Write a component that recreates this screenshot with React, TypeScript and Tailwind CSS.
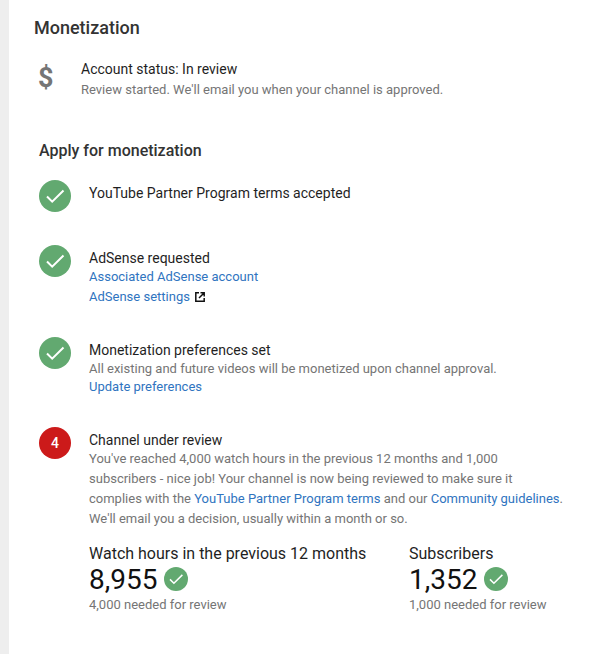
import { ReactNode } from 'react'

function Check({ size = 32, className }: { size?: number; className?: string }) {
  return (
    <svg width={size} height={size} viewBox="0 0 32 32" className={`shrink-0 ${className ?? ''}`}>
      <circle cx="16" cy="16" r="16" fill="#62a970" />
      <path d="M8 16.5l5.2 5.2L24.5 10.5" fill="none" stroke="#fff" strokeWidth="2" />
    </svg>
  )
}

function Step({ icon, title, children, className }: { icon: ReactNode; title: string; children?: ReactNode; className?: string }) {
  return (
    <div className={`flex ${className ?? ''}`}>
      <div className="w-[50px] shrink-0">{icon}</div>
      <div className="flex-1 pt-[3px]">
        <div className="text-[14px] leading-[20px] text-[#1f1f1f]">{title}</div>
        {children}
      </div>
    </div>
  )
}

function Stat({ label, value, need, className }: { label: string; value: string; need: string; className?: string }) {
  return (
    <div className={className}>
      <div className="text-[16px] leading-[20px] text-[#1f1f1f]">{label}</div>
      <div className="flex items-center gap-[7px] h-[32px]">
        <span className="text-[28px] leading-[32px] text-[#111]">{value}</span>
        <Check size={24} className="-mt-[3px]" />
      </div>
      <div className="text-[13px] leading-[20px] text-[#757575] -mt-[1px]">{need}</div>
    </div>
  )
}

export default function App() {
  return (
    <div className="h-[654px] w-[604px] overflow-hidden bg-white font-['Roboto','Liberation_Sans',sans-serif]">
      <div className="h-full border-l-[9px] border-[#eeeeee] pl-[25px] pt-[16px]">
        <h1 className="text-[18px] leading-[24px] font-medium text-[#333]">Monetization</h1>
        <div className="flex mt-[19px]">
          <div className="w-[47px] text-[27px] leading-[40px] font-bold text-[#757575] pl-[4px] -mt-[1px]">$</div>
          <div>
            <div className="text-[14px] leading-[20px] text-[#1f1f1f]">Account status: In review</div>
            <div className="text-[13px] leading-[20px] text-[#757575] mt-[1px]">Review started. We'll email you when your channel is approved.</div>
          </div>
        </div>
        <div className="ml-[5px] mt-[39px]">
          <h2 className="text-[16px] leading-[24px] font-medium text-[#333]">Apply for monetization</h2>
          <Step className="mt-[17px]" icon={<Check />} title="YouTube Partner Program terms accepted" />
          <Step className="mt-[33px]" icon={<Check />} title="AdSense requested">
            <div className="text-[13px] leading-[20px] text-[#2f74c0] -mt-[1px]">Associated AdSense account</div>
            <div className="text-[13px] leading-[20px] text-[#2f74c0] flex items-center gap-[5px]">
              AdSense settings
              <svg width="10" height="10" viewBox="0 0 10 10" fill="none" stroke="#111" strokeWidth="1.5">
                <path d="M4 .8H.8v8.4h8.4V6M5.5 .8h3.7v3.7M9 1L4 6" />
              </svg>
            </div>
          </Step>
          <Step className="mt-[30px]" icon={<Check />} title="Monetization preferences set">
            <div className="text-[13px] leading-[20px] text-[#757575] -mt-[1px]">All existing and future videos will be monetized upon channel approval.</div>
            <div className="text-[13px] leading-[20px] text-[#2f74c0] -mt-[2px]">Update preferences</div>
          </Step>
          <Step
            className="mt-[30px]"
            icon={
              <div className="w-[32px] h-[32px] rounded-full bg-[#cc1a1a] text-white text-[14px] font-medium flex items-center justify-center">4</div>
            }
            title="Channel under review"
          >
            <p className="text-[13px] leading-[20px] text-[#757575] w-[476px] -mt-[1px]">
              You've reached 4,000 watch hours in the previous 12 months and 1,000 subscribers - nice job! Your channel is now being reviewed to make sure it complies with the <span className="text-[#2f74c0]">YouTube Partner Program terms</span> and our <span className="text-[#2f74c0]">Community guidelines</span>. We'll email you a decision, usually within a month or so.
            </p>
          </Step>
          <div className="flex ml-[50px] mt-[15px]">
            <Stat className="w-[320px]" label="Watch hours in the previous 12 months" value="8,955" need="4,000 needed for review" />
            <Stat label="Subscribers" value="1,352" need="1,000 needed for review" />
          </div>
        </div>
      </div>
    </div>
  )
}
